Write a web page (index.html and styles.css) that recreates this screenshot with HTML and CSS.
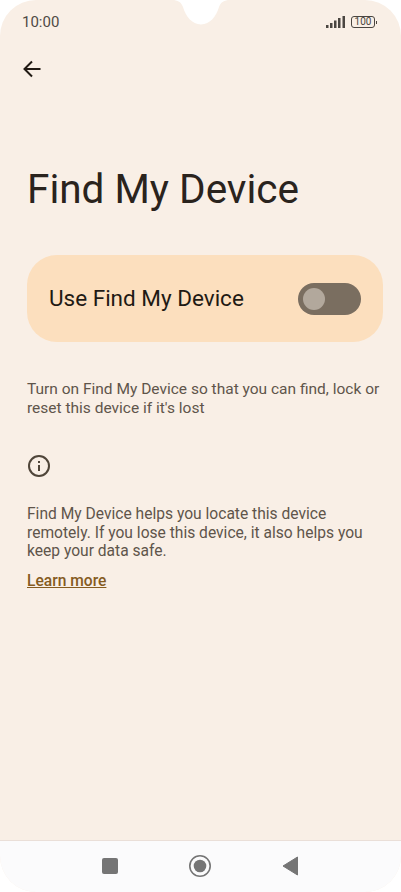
FILE: index.html

```html
<!DOCTYPE html>
<html lang="en">
<head>
  <meta charset="UTF-8">
  <meta name="viewport" content="width=device-width, initial-scale=1">
  <title>Find My Device</title>
  <link rel="stylesheet" href="styles.css">
</head>
<body>
  <div class="screen">
    <svg class="notch" width="58" height="25" viewBox="0 0 58 25">
      <path d="M0 0H58C52 0 49 2 47 7 44.500 16 38 24.500 29 24.500 20 24.500 13.500 16 11 7 9 2 6 0 0 0Z" fill="#fff"/>
    </svg>

    <div class="status">
      <span class="time">10:00</span>
      <div class="status-icons">
        <svg width="19" height="12" viewBox="0 0 19 12">
          <rect x="0" y="9" width="2.500" height="3" fill="#4a4540"/>
          <rect x="4" y="7" width="2.500" height="5" fill="#4a4540"/>
          <rect x="8" y="4.500" width="2.500" height="7.500" fill="#4a4540"/>
          <rect x="12" y="2" width="2.500" height="10" fill="#4a4540"/>
          <rect x="16.500" y="0" width="2.500" height="12" fill="#4a4540"/>
        </svg>
        <div class="battery">100</div>
        <div class="battery-tip"></div>
      </div>
    </div>

    <div class="toolbar">
      <svg width="20" height="20" viewBox="0 0 20 20">
        <path d="M18.500 10H2.500M10 2.500 2.500 10 10 17.500" fill="none" stroke="#211a14" stroke-width="2"/>
      </svg>
    </div>

    <h1>Find My Device</h1>

    <div class="main-switch">
      <span>Use Find My Device</span>
      <div class="toggle"><div class="thumb"></div></div>
    </div>

    <p class="summary">Turn on Find My Device so that you can find, lock or reset this device if it's lost</p>

    <svg class="info" width="24" height="24" viewBox="0 0 24 24">
      <circle cx="12" cy="12" r="10" fill="none" stroke="#4f4539" stroke-width="2"/>
      <rect x="11" y="11" width="2" height="6" fill="#4f4539"/>
      <rect x="11" y="7" width="2" height="2" fill="#4f4539"/>
    </svg>

    <p class="about">Find My Device helps you locate this device remotely. If you lose this device, it also helps you keep your data safe.</p>
    <a class="learn" href="#">Learn more</a>

    <div class="navbar">
      <div class="nav-square"></div>
      <svg width="24" height="24" viewBox="0 0 24 24">
        <circle cx="12" cy="12" r="10.200" fill="none" stroke="#757575" stroke-width="1.600"/>
        <circle cx="12" cy="12" r="6.300" fill="#757575"/>
      </svg>
      <svg width="16" height="20" viewBox="0 0 16 20">
        <path d="M15.500 1V19L1 10Z" fill="#757575" stroke="#757575" stroke-linejoin="round"/>
      </svg>
    </div>
  </div>
</body>
</html>
```

FILE: styles.css

```css
html, body {
  margin: 0;
  background: #fff;
}
body {
  font-family: Roboto, sans-serif;
  color: #5f554b;
}
.screen {
  position: relative;
  width: 401px;
  height: 892px;
  display: flex;
  flex-direction: column;
  background: #f9efe6;
  border-radius: 36px;
  overflow: hidden;
}
.notch {
  position: absolute;
  left: 172px;
  top: 0;
}
.status {
  height: 44px;
  padding: 0 24px 0 22px;
  display: flex;
  align-items: center;
  justify-content: space-between;
}
.time {
  font-size: 15px;
  color: #4f4a45;
}
.status-icons {
  display: flex;
  align-items: center;
}
.status-icons svg {
  margin-right: 6px;
}
.battery {
  width: 22px;
  height: 10px;
  border: 1px solid #4a4540;
  border-radius: 3px;
  font-size: 10px;
  line-height: 10px;
  text-align: center;
  color: #4a4540;
}
.battery-tip {
  width: 1px;
  height: 3px;
  margin-left: 1px;
  background: #4a4540;
}
.toolbar {
  height: 50px;
  padding-left: 22px;
  display: flex;
  align-items: center;
}
h1 {
  margin: 66px 0 0 27px;
  font-size: 40.500px;
  line-height: 58px;
  font-weight: 400;
  color: #2a231d;
}
.main-switch {
  margin: 37px 18px 0 27px;
  height: 87px;
  padding: 0 22px 2px;
  box-sizing: border-box;
  display: flex;
  align-items: center;
  justify-content: space-between;
  background: #fcdfbe;
  border-radius: 30px;
  font-size: 22.500px;
  color: #1f1a14;
}
.toggle {
  width: 63px;
  height: 32px;
  margin-top: 2px;
  display: flex;
  align-items: center;
  padding-left: 5px;
  box-sizing: border-box;
  background: #7a6e60;
  border-radius: 16px;
}
.thumb {
  width: 22px;
  height: 22px;
  border-radius: 50%;
  background: #b2a89c;
}
.summary, .about {
  margin: 0 18px 0 27px;
  font-size: 15.500px;
  line-height: 18.500px;
}
.summary {
  margin-top: 38px;
}
.info {
  margin: 37px 0 0 27px;
  display: block;
}
.about {
  margin-top: 27px;
  margin-right: 16px;
  font-size: 15.600px;
}
.learn {
  margin: 10px 0 0 27px;
  font-size: 15.600px;
  line-height: 20px;
  font-weight: 500;
  color: #855b1f;
  align-self: flex-start;
}
.navbar {
  margin-top: auto;
  height: 50px;
  padding: 0 103px 1px 102px;
  display: flex;
  align-items: center;
  justify-content: space-between;
  background: #fbfbfc;
  border-top: 1px solid #eadfd8;
}
.nav-square {
  width: 16px;
  height: 16px;
  border-radius: 2px;
  background: #757575;
}
```
